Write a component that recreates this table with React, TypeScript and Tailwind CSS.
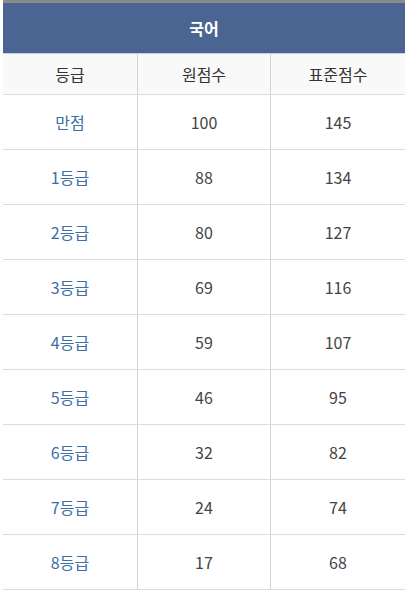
import React from "react";

const rows: [string, string, string][] = [
  ["만점", "100", "145"],
  ["1등급", "88", "134"],
  ["2등급", "80", "127"],
  ["3등급", "69", "116"],
  ["4등급", "59", "107"],
  ["5등급", "46", "95"],
  ["6등급", "32", "82"],
  ["7등급", "24", "74"],
  ["8등급", "17", "68"],
];

export default function App() {
  return (
    <div
      className="w-[408px] h-[595px] bg-white px-[3px]"
      style={{ fontFamily: '"Noto Sans CJK KR", "Noto Sans", sans-serif' }}
    >
      <div className="w-[402px] border-t-[3px] border-[#8a8a8a]">
        <div className="h-[51px] bg-[#4a6591] flex items-center justify-center text-white font-bold text-[16px] border-b border-[#c9cde0]">
          국어
        </div>
        <div className="grid grid-cols-[135px_133px_134px] h-[41px] bg-[#f9f9f9] border-b border-[#dcdcdc] text-[16px] text-[#333]">
          <div className="flex items-center justify-center border-r border-[#d4d4d4]">등급</div>
          <div className="flex items-center justify-center border-r border-[#d4d4d4]">원점수</div>
          <div className="flex items-center justify-center">표준점수</div>
        </div>
        {rows.map(([g, r, s]) => (
          <div
            key={g}
            className="grid grid-cols-[135px_133px_134px] h-[55px] border-b border-[#dcdcdc] text-[16px]"
          >
            <div className="flex items-center justify-center border-r border-[#d4d4d4] text-[#3b6fa6]">{g}</div>
            <div className="flex items-center justify-center border-r border-[#d4d4d4] text-[#444]">{r}</div>
            <div className="flex items-center justify-center text-[#444]">{s}</div>
          </div>
        ))}
      </div>
    </div>
  );
}
